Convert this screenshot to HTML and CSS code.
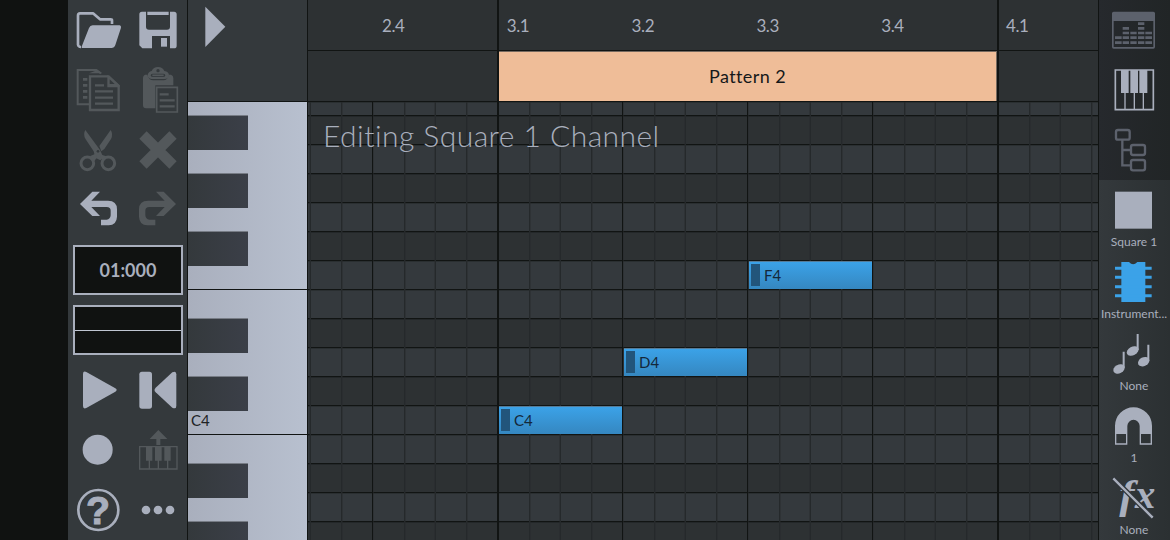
FILE: index.html
```html
<!DOCTYPE html>
<html lang="en">
<head>
<meta charset="utf-8">
<title>Piano roll</title>
<link rel="stylesheet" href="styles.css">
</head>
<body>
<div class="app">
  <aside class="toolbar">
    <div class="tools">
      <svg viewBox="24 0 180 180"><path class="line" stroke-width="8" stroke-linejoin="round" d="M156 72V61Q156 58 152 58H120L99 40H60Q54 40 54 47V134Q55 141 63 141"/><path d="M98 76H179Q184 77 183 83L166 135Q163 144 154 144H68Q63 144 66 137L87 84Q90 76 98 76Z"/></svg>
      <svg viewBox="204 0 180 180"><path fill-rule="evenodd" d="M246 35H342Q350 35 350 43V137Q350 145 342 145H330V108H276V145H247L238 136V43Q238 35 246 35ZM258 45V80Q258 89 267 89H321Q330 89 330 80V45ZM258 35V45H262V35ZM326 35V45H330V35Z"/><path d="M303 114H321V140H303Z"/></svg>
      <svg class="off" viewBox="24 180 180 180"><path class="line" stroke-width="6" d="M88 313H53V210H109L123 220"/><path d="M105 207L127 220H87L105 213Z"/><path class="line" stroke-width="8" d="M69 238H82M69 256H82M69 274H82M69 292H82"/><path class="line" stroke-width="7" d="M90 229H146L176 257V330H90Z"/><path d="M142 225L179 256V262H142Z"/><path class="cut" d="M149 238V252H164Z"/><path class="line" stroke-width="7" d="M105 256H132M105 274H159M105 293H159M105 311H159"/></svg>
      <svg class="off" viewBox="204 180 180 180"><path d="M255 224H262Q266 241 280 241H310Q323 241 326 224H333Q340 226 340 234V256H286V325H258Q249 325 249 316V234Q249 226 255 224Z"/><path fill-rule="evenodd" d="M275 213Q280 201 294 201Q308 201 313 213Q327 215 327 226Q326 237 314 237H274Q263 236 263 226Q264 215 275 213ZM294 207A5 5 0 1 0 294.100 217A5 5 0 1 0 294 207ZM278 221Q272 221 272 226T278 231H310Q316 231 316 226T310 221Z"/><path class="line" stroke-width="5" d="M277 226H311"/><path class="line" stroke-width="5" d="M290 262H352V336H290Z"/><path class="line" stroke-width="7" d="M299 283H326M299 301H344M299 319H344"/></svg>
      <svg class="off" viewBox="24 30 180 180"><path d="M76 60Q68 73 77 88L101 124L106 143L121 151L130 142L120 120ZM152 60Q160 72 153 87L133 117L124 124L118 108Z"/><path class="line" stroke-width="9" d="M101 160A19 19 0 1 1 63 160A19 19 0 1 1 101 160M164 160A19 19 0 1 1 126 160A19 19 0 1 1 164 160"/><path d="M91 138L107 131L110 144L101 155ZM119 133L139 139L128 154Z"/><circle class="cut" cx="114" cy="124" r="4"/></svg>
      <svg class="off" viewBox="204 30 180 180"><path class="line" stroke-width="31" d="M249 75L339 165M339 75L249 165"/></svg>
      <svg viewBox="24 210 180 180"><path d="M60 282L97 245H120L94 272H144Q171 272 171 298V320Q170 345 146 346H123V329H140Q151 328 152 316V302Q152 291 140 291H94L120 318H97Z"/></svg>
      <svg class="off" viewBox="204 210 180 180"><path d="M348 282L311 245H288L314 272H264Q237 272 237 298V320Q238 345 262 346H286V329H268Q257 328 256 316V302Q256 291 268 291H314L288 318H311Z"/></svg>
    </div>
    <div class="clock">01:000</div>
    <div class="meter"><span></span><span></span></div>
    <div class="tools">
      <svg viewBox="24 0 180 180"><path d="M69 42Q69 32 79 36L166 85Q174 90 166 95L79 144Q69 148 69 138Z"/></svg>
      <svg viewBox="204 0 180 180"><rect x="238" y="35" width="38" height="111" rx="8"/><path d="M349 43Q349 31 337 37L287 83Q280 90 287 97L337 143Q349 149 349 137Z"/></svg>
      <svg viewBox="24 180 180 180"><circle cx="113" cy="269" r="45"/></svg>
      <svg class="off" viewBox="204 180 180 180"><path d="M295 210L322 237H301V255H289V237H269Z"/><path class="line" stroke-width="4" d="M239 260H351V327H239ZM268 300V325M295 300V325M323 300V325"/><path d="M258 260H277V302H258ZM285 260H305V302H285ZM313 260H332V302H313Z"/></svg>
      <svg viewBox="24 360 180 180"><circle class="line" stroke-width="8" cx="115" cy="450" r="60"/><text class="help" x="114" y="492" text-anchor="middle">?</text></svg>
      <svg viewBox="204 360 180 180"><circle cx="258" cy="450" r="13"/><circle cx="294" cy="450" r="13"/><circle cx="330" cy="450" r="13"/></svg>
    </div>
  </aside>

  <section class="keys">
    <div class="keys-head"><svg viewBox="386 0 180 180"><path d="M438 20L498 80L438 141Z"/></svg></div>
    <div class="keyboard">
      <div class="lane first"></div>
      <div class="lane black"></div><div class="lane"></div>
      <div class="lane black"></div><div class="lane"></div>
      <div class="lane black"></div><div class="lane octave"></div>
      <div class="lane"></div><div class="lane black"></div>
      <div class="lane"></div><div class="lane black"></div>
      <div class="lane octave"><span>C4</span></div>
      <div class="lane"></div><div class="lane black"></div>
      <div class="lane"></div><div class="lane black"></div>
    </div>
  </section>

  <main class="editor">
    <div class="ruler">
      <span>2.4</span><span>3.1</span><span>3.2</span><span>3.3</span><span>3.4</span><span>4.1</span>
    </div>
    <div class="patterns"><div class="pattern">Pattern 2</div></div>
    <div class="roll">
      <div class="row first"></div>
      <div class="row dark"></div><div class="row"></div>
      <div class="row dark"></div><div class="row"></div>
      <div class="row dark"></div><div class="row"></div>
      <div class="row"></div><div class="row dark"></div>
      <div class="row"></div><div class="row dark"></div>
      <div class="row"></div>
      <div class="row"></div><div class="row dark"></div>
      <div class="row"></div><div class="row dark"></div>
      <div class="title">Editing Square 1 Channel</div>
      <div class="note c4"><i></i>C4</div>
      <div class="note d4"><i></i>D4</div>
      <div class="note f4"><i></i>F4</div>
    </div>
    <svg class="beats" viewBox="308 0 790 540" shape-rendering="crispEdges">
      <path class="glow" d="M309.500 102V540M342.500 102V540M373.500 102V540M405.500 102V540M434.500 102V540M467.500 102V540M530.500 102V540M559.500 102V540M592.500 102V540M623.500 102V540M655.500 102V540M684.500 102V540M717.500 102V540M748.500 102V540M780.500 102V540M809.500 102V540M842.500 102V540M873.500 102V540M905.500 102V540M934.500 102V540M967.500 102V540M1030.500 102V540M1059.500 102V540M1092.500 102V540"/>
      <path class="step" d="M310.500 102V540M341.500 102V540M404 102V540M435.500 102V540M466.500 102V540M529 102V540M560.500 102V540M591.500 102V540M654 102V540M685.500 102V540M716.500 102V540M779.500 102V540M810.500 102V540M841.500 102V540M904 102V540M935.500 102V540M966.500 102V540M1029.500 102V540M1060.500 102V540M1091.500 102V540"/>
      <path class="beat" d="M372.500 102V540M622.500 102V540M747.500 102V540M872.500 102V540"/>
      <path class="bar" d="M498 0V540M998 0V540"/>
    </svg>
  </main>

  <aside class="sidebar">
    <div class="views">
      <svg class="dim" viewBox="29 0 213 180"><path fill-rule="evenodd" d="M73 35H192Q197 35 197 40V141Q197 146 192 146H73Q68 146 68 141V40Q68 35 73 35ZM73 63V141H192V63Z"/><path class="line" stroke-width="8" d="M77 128H97M77 113H97M100 128H119M100 113H119M100 99H119M100 85H119M123 128H142M123 113H142M123 99H142M146 128H165M146 113H165M146 99H165M146 85H165M146 71H165M168 128H188M168 113H188M168 99H188"/></svg>
      <svg viewBox="29 180 213 180"><path class="line" stroke-width="5" d="M78 210H192V329H78Z"/><path class="line" stroke-width="4" d="M107 275V328M135 275V328M162 275V328"/><path d="M95 210H118V279H95ZM123 210H146V279H123ZM150 210H174V279H150Z"/></svg>
      <svg class="dim" viewBox="29 360 213 180"><path class="line" stroke-width="7" d="M99 420V496H126M99 450H126"/><g class="line" stroke-width="7"><rect x="80" y="390" width="41" height="29" rx="6"/><rect x="125" y="435" width="42" height="30" rx="6"/><rect x="125" y="480" width="42" height="31" rx="6"/></g></svg>
    </div>
    <div class="settings">
      <div class="item"><svg viewBox="29 0 213 156"><rect x="77" y="35" width="111" height="111"/></svg><span>Square 1</span></div>
      <div class="item"><svg class="active" viewBox="29 216 213 156"><path d="M96 246H119Q131 260 144 246H168V366H96Z"/><path class="line" stroke-width="9" d="M77 265H187M77 292H187M77 320H187M77 347H187"/></svg><span>Instrument...</span></div>
      <div class="item"><svg viewBox="29 -108 213 156"><path class="line" stroke-width="6" d="M145 -78V-30M103 -25V24M177 -46V4"/><ellipse cx="130" cy="-27" rx="19" ry="13" transform="rotate(-28 130 -27)"/><ellipse cx="89" cy="27" rx="18" ry="13" transform="rotate(-28 89 27)"/><ellipse cx="163" cy="5" rx="18" ry="13" transform="rotate(-28 163 5)"/></svg><span>None</span></div>
      <div class="item"><svg viewBox="29 108 213 156"><path fill-rule="evenodd" d="M77 254V197A55.500 55 0 0 1 188 197V254H151V198A18 18 0 0 0 114 198V254ZM81 222V250H110V222ZM155 222V250H184V222Z"/></svg><span>1</span></div>
      <div class="item"><svg viewBox="29 324 213 156"><text class="fx" transform="translate(90 443) scale(1.120 1)">f</text><text class="fx" x="137" y="443">x</text><path class="gap" d="M72 355L190 473"/><path class="line" stroke-width="7" d="M72 355L190 473"/></svg><span>None</span></div>
    </div>
  </aside>
</div>
</body>
</html>
```
FILE: styles.css
```css
* { box-sizing: border-box; }
body {
  margin: 0;
  background: #101211;
  color: #a9afbd;
  font-family: Lato, "Open Sans", sans-serif;
  font-weight: 300;
  font-variant-ligatures: none;
}
svg { display: block; fill: #a9afbd; }
svg .line { fill: none; stroke: #a9afbd; }
svg.off { fill: #53585b; }
svg.off .line { stroke: #53585b; }
svg.off .cut { fill: #34393c; }
svg.dim { fill: #5c616c; }
svg.dim .line { stroke: #5c616c; }
svg.active { fill: #3ba2e8; }
svg.active .line { stroke: #3ba2e8; }

.app {
  display: flex;
  width: 1170px;
  height: 540px;
  padding-left: 68px;
  overflow: hidden;
}

.toolbar {
  width: 120px;
  background: #34393c;
  border-right: 1px solid #111413;
  flex: none;
}
.tools {
  display: grid;
  grid-template-columns: 60px 60px;
  grid-auto-rows: 60px;
  width: 120px;
}
.tools svg { width: 60px; height: 60px; }
.help {
  font-family: "Liberation Sans", sans-serif;
  font-weight: 700;
  font-size: 118px;
  stroke: #a9afbd;
  stroke-width: 3px;
}
.clock, .meter {
  width: 110px;
  height: 50px;
  margin: 5px 0 0 5px;
  background: #101211;
  border: 2px solid #a9afbd;
}
.clock {
  display: flex;
  align-items: center;
  justify-content: center;
  font-size: 18px;
  font-weight: 700;
  letter-spacing: 0;
}
.meter { margin: 10px 0 5px 5px; display: flex; flex-direction: column; }
.meter span { flex: 1; }
.meter span + span { border-top: 1px solid #c0c6d2; }

.keys {
  width: 120px;
  flex: none;
  border-right: 1px solid #111413;
  background: #34393c;
}
.keys-head { height: 102px; border-bottom: 1px solid #111413; }
.keys-head svg { width: 60px; height: 60px; }
.keyboard { background: linear-gradient(90deg, #a9afbd, #b8c0cf); }
.lane { height: 29px; }
.lane.first { height: 14px; }
.lane.black { display: flex; align-items: flex-start; }
.lane.black::before {
  content: "";
  flex: none;
  width: 60px;
  height: 34px;
  margin-top: -1px;
  background: linear-gradient(90deg, #34393c, #3b3f48);
  border-top: 1px solid #777c85;
}
.lane.octave { border-bottom: 1px solid #111413; }
.lane span {
  display: block;
  padding-left: 3px;
  color: #202325;
  font-size: 15px;
  line-height: 28px;
  font-weight: 400;
}

.editor {
  position: relative;
  width: 791px;
  flex: none;
  border-right: 1px solid #111413;
  background: #2d3133;
}
.ruler {
  display: flex;
  height: 51px;
  padding-left: 74px;
  border-bottom: 1px solid #111413;
  font-size: 17px;
  line-height: 51px;
  font-weight: 400;
  letter-spacing: -0.4px;
}
.ruler span { width: 124.8px; flex: none; }
.patterns {
  height: 51px;
  padding-left: 191px;
  border-bottom: 1px solid #111413;
}
.pattern {
  width: 498px;
  height: 50px;
  border-top: 1px solid #75695f;
  border-right: 1px solid #75695f;
  background: #efbd98;
  color: #15181a;
  font-size: 18px;
  line-height: 49px;
  letter-spacing: 0.4px;
  text-align: center;
  font-weight: 400;
}
.roll { position: relative; }
.row {
  height: 29px;
  background: #34393d;
  border-bottom: 1px solid #111413;
  box-shadow: inset 0 1px #2a2f31;
}
.row.first { height: 14px; }
.row.dark { background: #2d3133; box-shadow: inset 0 1px #232729; }
.beats {
  position: absolute;
  left: 0;
  top: 0;
  width: 790px;
  height: 540px;
}
.beats path { fill: none; }
.beats .glow { stroke: #272b2d; stroke-opacity: 0.45; stroke-width: 1px; }
.beats .step { stroke: #25292b; stroke-width: 1px; }
.beats .beat { stroke: #111413; stroke-width: 1px; }
.beats .bar { stroke: #111413; stroke-width: 2px; }
.title {
  position: absolute;
  z-index: 2;
  left: 15px;
  top: 14px;
  font-size: 30px;
  line-height: 38px;
  letter-spacing: 0.45px;
  white-space: nowrap;
}
.note {
  position: absolute;
  z-index: 2;
  display: flex;
  align-items: center;
  gap: 4px;
  width: 123px;
  height: 28px;
  padding: 1px 2px 3px;
  border-top: 1px solid #557b98;
  background: linear-gradient(#3ba2e8, #3587c0);
  color: #14283a;
  font-size: 15px;
  font-weight: 400;
}
.note i { width: 9px; height: 22px; background: #22557b; }
.c4 { left: 191px; top: 304px; }
.d4 { left: 316px; top: 246px; }
.f4 { left: 441px; top: 159px; }

.sidebar { flex: 1; min-width: 0; }
.views { height: 180px; background: linear-gradient(90deg, #26292d, #212526); }
.views svg { width: 71px; height: 60px; }
.settings { height: 360px; background: linear-gradient(90deg, #34393c, #2b3032); }
.item { height: 72px; text-align: center; }
.item svg { width: 71px; height: 52px; }
.item span {
  display: block;
  padding-right: 1px;
  font-size: 12px;
  line-height: 20px;
  font-weight: 400;
  white-space: nowrap;
}
.fx {
  font-family: "Liberation Serif", serif;
  font-style: italic;
  font-weight: 700;
  font-size: 122px;
}
.gap { fill: none; stroke: #30353a; stroke-width: 15px; }
```
